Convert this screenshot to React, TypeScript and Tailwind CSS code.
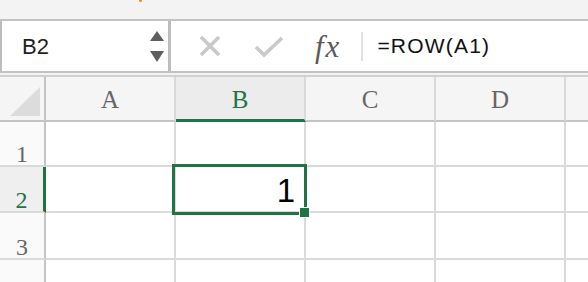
import React from 'react';

const GREEN = '#217346';

const cols = ['A', 'B', 'C', 'D'];
const rows = [
  { n: 1, h: 'h-[45px]' },
  { n: 2, h: 'h-[46px]' },
  { n: 3, h: 'h-[47px]' },
  { n: 4, h: 'h-[30px]' },
];

const serif = { fontFamily: '"Liberation Serif", "DejaVu Serif", serif' };
const sans = { fontFamily: '"Liberation Sans", Arial, sans-serif' };

const App: React.FC = () => {
  return (
    <div className="relative w-[588px] h-[282px] overflow-hidden bg-white" style={sans}>
      {/* ribbon edge */}
      <div className="relative h-[19px] bg-[#f3f3f3]">
        <div className="absolute left-[139px] top-0 w-[3px] h-[2px] rounded-b-full bg-[#f08a2c]" />
      </div>

      {/* formula bar */}
      <div className="flex h-[54px] border-t-2 border-b-2 border-[#c2c2c2] bg-white">
        <div className="flex items-center w-[171px] border-l-2 border-r-[3px] border-[#bdbdbd] pl-[20px] pr-[4px]">
          <span className="flex-1 text-[22px] text-[#1f1f1f]">B2</span>
          <div className="flex flex-col items-center gap-[10px]">
            <div className="w-0 h-0 border-l-[7px] border-r-[7px] border-b-[10px] border-l-transparent border-r-transparent border-b-[#5f5f5f]" />
            <div className="w-0 h-0 border-l-[7px] border-r-[7px] border-t-[11px] border-l-transparent border-r-transparent border-t-[#5f5f5f]" />
          </div>
        </div>
        <div className="flex flex-1 items-center">
          <svg width="24" height="24" viewBox="0 0 24 24" className="ml-[27px]">
            <path d="M3 3 L21 21 M21 3 L3 21" stroke="#c9c9c9" strokeWidth="3.6" fill="none" />
          </svg>
          <svg width="30" height="22" viewBox="0 0 30 22" className="ml-[32px] mt-[2px]">
            <path d="M2 11 L10 19 L28 2" stroke="#c9c9c9" strokeWidth="3.6" fill="none" />
          </svg>
          <span className="ml-[31px] text-[31px] italic tracking-[2px] text-[#5a5a5a] leading-none" style={serif}>
            fx
          </span>
          <div className="ml-[20px] w-[2px] h-[29px] bg-[#e0e0e0]" />
          <span className="ml-[14px] text-[21px] tracking-[1.2px] text-[#111]">=ROW(A1)</span>
        </div>
      </div>
      <div className="h-[2px] bg-[#f3f3f3]" />
      <div className="h-[2px] bg-[#d0d0d0]" />

      {/* grid */}
      <div className="grid grid-cols-[46px_130px_130px_130px_130px_1fr]">
        {/* header row */}
        <div className="relative h-[45px] bg-[#f5f5f5] border-r-2 border-b-2 border-[#c4c4c4]">
          <svg width="30" height="29" viewBox="0 0 30 29" className="absolute left-[10px] bottom-[4px]">
            <path d="M30 0 L30 29 L0 29 Z" fill="#dcdcdc" />
          </svg>
        </div>
        {cols.map(c => (
          <div
            key={c}
            className={
              c === 'B'
                ? 'flex items-center justify-center h-[45px] bg-[#ececec] border-r-2 border-[#dadada] border-b-[3px] border-b-[#217346] text-[25px] text-[#217346]'
                : 'flex items-center justify-center h-[45px] bg-[#f5f5f5] border-r-2 border-[#dadada] border-b-2 border-b-[#c4c4c4] text-[25px] text-[#666]'
            }
            style={serif}
          >
            <span className="leading-none mt-[2px]">{c}</span>
          </div>
        ))}
        <div className="h-[45px] bg-[#f5f5f5] border-b-2 border-[#c4c4c4]" />

        {/* body rows */}
        {rows.map(r => (
          <React.Fragment key={r.n}>
            <div
              className={
                r.n === 2
                  ? `flex items-end justify-center ${r.h} bg-[#efefef] border-r-[3px] border-r-[#217346] border-b-2 border-b-[#dadada] text-[24px] text-[#217346]`
                  : `flex items-end justify-center ${r.h} bg-[#fafafa] border-r-2 border-r-[#c4c4c4] border-b-2 border-b-[#dadada] text-[24px] text-[#666]`
              }
              style={serif}
            >
              <span className="leading-none mb-[-1px]">{r.n < 4 ? r.n : ''}</span>
            </div>
            {cols.map(c => (
              <div
                key={c}
                className={`flex items-center justify-end pr-[9px] ${r.h} border-r-2 border-b-2 border-[#dadada] text-[33px] text-black`}
              >
                {r.n === 2 && c === 'B' ? <span className="leading-none mt-[2px]">1</span> : null}
              </div>
            ))}
            <div className={`${r.h} border-b-2 border-[#dadada]`} />
          </React.Fragment>
        ))}
      </div>

      {/* selection */}
      <div className="absolute left-[172px] top-[164px] w-[135px] h-[51px] border-[3px] border-[#217346]" />
      <div
        className="absolute left-[299px] top-[207px] w-[11px] h-[11px] border border-white"
        style={{ backgroundColor: GREEN }}
      />
    </div>
  );
};

export default App;
